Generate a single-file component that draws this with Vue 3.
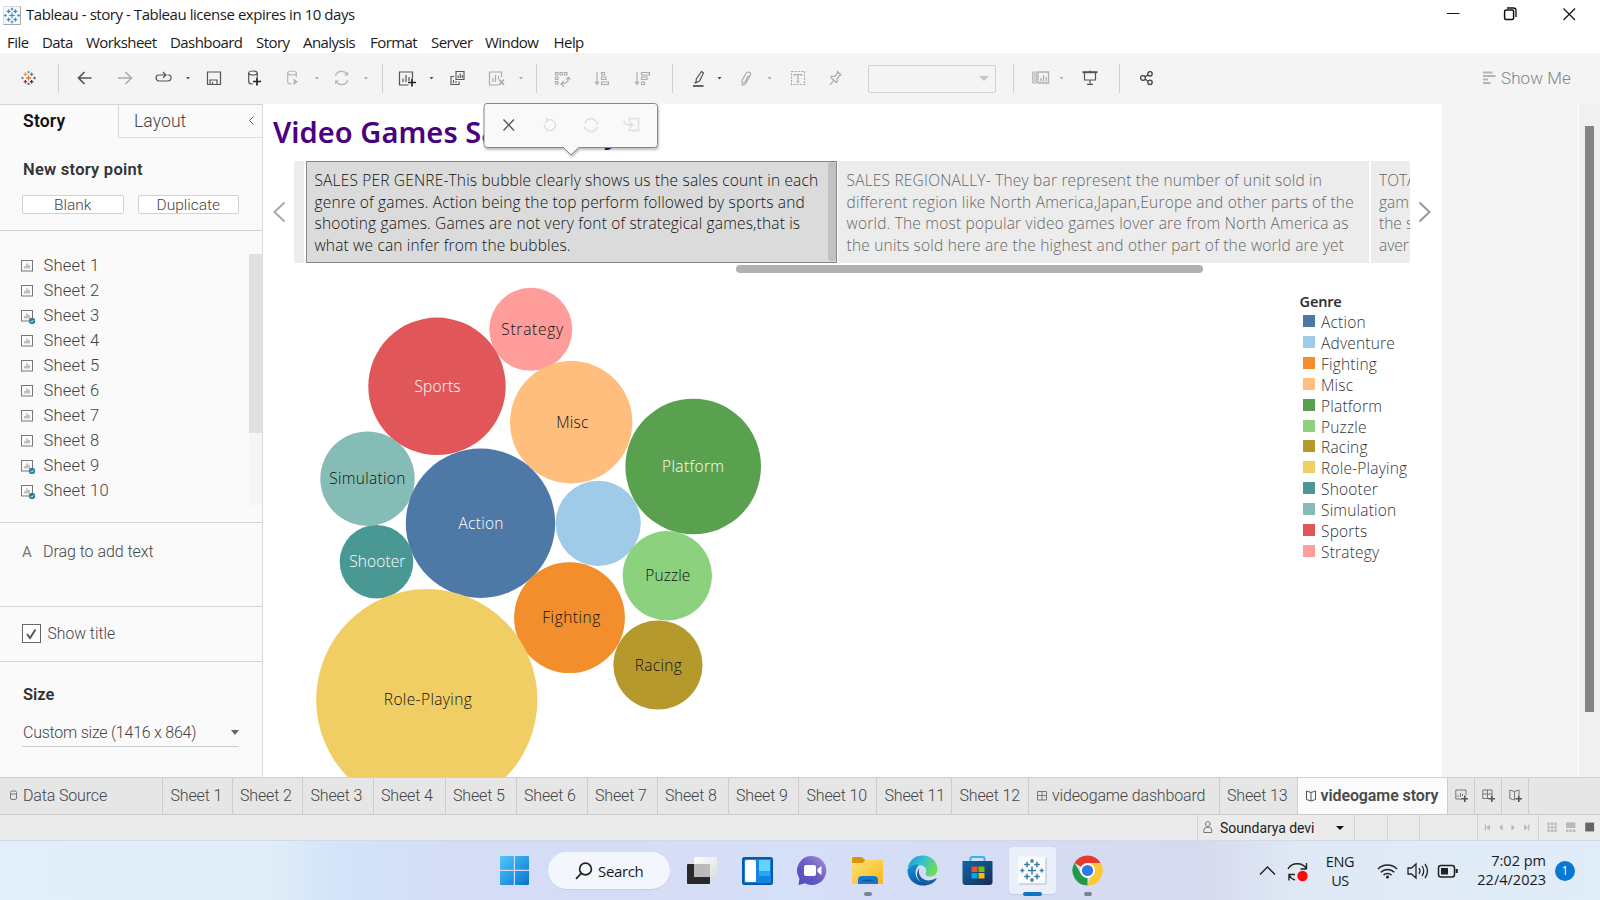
<script setup>
const menus = [
  { t: 'File', w: 35 }, { t: 'Data', w: 44 }, { t: 'Worksheet', w: 84 }, { t: 'Dashboard', w: 86 }, { t: 'Story', w: 47 },
  { t: 'Analysis', w: 67 }, { t: 'Format', w: 61 }, { t: 'Server', w: 54 }, { t: 'Window', w: 68.5 }, { t: 'Help', w: 40 },
]
const sheets = [1, 2, 3, 4, 5, 6, 7, 8, 9, 10].map(n => ({ n, used: [3, 9, 10].includes(n) }))
const bubbles = [
  { n: 'Strategy', x: 530.8, y: 328.8, r: 41.5, c: '#ff9d9a', tx: 532.2, w: 62 },
  { n: 'Sports', x: 437, y: 385.8, r: 68.7, c: '#e15759', tx: 437.5, w: 46, l: 1 },
  { n: 'Misc', x: 571.2, y: 421.8, r: 61.2, c: '#ffbe7d', tx: 572.3, w: 32 },
  { n: 'Platform', x: 693.2, y: 466, r: 67.8, c: '#59a14f', tx: 693, w: 62, l: 1 },
  { n: 'Simulation', x: 367.5, y: 478.2, r: 47.2, c: '#86bcb6', tx: 367.3, w: 76 },
  { n: 'Action', x: 480.5, y: 522.7, r: 74.7, c: '#4e79a7', tx: 481, w: 45, l: 1 },
  { n: '', x: 598.2, y: 522.8, r: 42.6, c: '#a0cbe8', tx: 598, w: 1 },
  { n: 'Shooter', x: 376.5, y: 561.3, r: 36.8, c: '#499894', tx: 377.3, w: 56, l: 1 },
  { n: 'Puzzle', x: 667.3, y: 575.3, r: 44.7, c: '#8cd17d', tx: 667.8, w: 45 },
  { n: 'Fighting', x: 569.5, y: 617.2, r: 55.4, c: '#f28e2b', tx: 571.3, w: 58 },
  { n: 'Racing', x: 658, y: 664.5, r: 44.6, c: '#b6992d', tx: 658.2, w: 47 },
  { n: 'Role-Playing', x: 426.8, y: 699.2, r: 110.6, c: '#f1ce63', tx: 427.8, w: 88 },
]
const legend = [
  ['Action', '#4e79a7'], ['Adventure', '#a0cbe8'], ['Fighting', '#f28e2b'], ['Misc', '#ffbe7d'],
  ['Platform', '#59a14f'], ['Puzzle', '#8cd17d'], ['Racing', '#b6992d'], ['Role-Playing', '#f1ce63'],
  ['Shooter', '#499894'], ['Simulation', '#86bcb6'], ['Sports', '#e15759'], ['Strategy', '#ff9d9a'],
]
const tabs = [
  { t: 'Sheet 1', w: 69.5 }, { t: 'Sheet 2', w: 70.5 }, { t: 'Sheet 3', w: 70.5 }, { t: 'Sheet 4', w: 72 }, { t: 'Sheet 5', w: 71 },
  { t: 'Sheet 6', w: 71 }, { t: 'Sheet 7', w: 70 }, { t: 'Sheet 8', w: 71 }, { t: 'Sheet 9', w: 70.5 }, { t: 'Sheet 10', w: 78 },
  { t: 'Sheet 11', w: 75 }, { t: 'Sheet 12', w: 77 },
]
const active = ['SALES PER GENRE-This bubble clearly shows us the sales count in each', 'genre of games. Action being the top perform followed by sports and', 'shooting games. Games are not very font of strategical games,that is', 'what we can infer from the bubbles.']
const regional = ['SALES REGIONALLY- They bar represent the number of unit sold in', 'different region like North America,Japan,Europe and other parts of the', 'world. The most popular video games lover are from North America as', 'the units sold here are the highest and other part of the world are yet']
const total = ['TOTA', 'gam', 'the s', 'aver']
const crosses = [[0, 0, 4], [-5, -6, 2.8], [5, -6, 2.8], [-5, 6, 2.8], [5, 6, 2.8], [0, -9.5, 1.9], [0, 9.5, 1.9], [-9.7, 0, 1.9], [9.7, 0, 1.9]]
const crossPath = ([x, y, r]) => `M${x - r} ${y}h${2 * r}M${x} ${y - r}v${2 * r}`
const logoColors = ['#e8762c', '#e09a45', '#5b879b', '#c72035', '#1f447e', '#7199a6', '#5b6591', '#7199a6', '#5b6591']
</script>

<template>
  <div class="app">
    <header class="title">
      <svg class="appicon" width="18" height="19" viewBox="-9 -9.5 18 19">
        <rect x="-8.5" y="-9" width="17" height="18" fill="#f4f7fa" stroke="#dcdcdc" />
        <path d="M8.5-9V9H-8.5" fill="none" stroke="#a8a8a8" />
        <g transform="scale(.68)"><path v-for="(c, i) in crosses" :key="i" :d="crossPath(c)" stroke="#3987b5" stroke-width="1.7" /></g>
      </svg>
      <span class="apptitle">Tableau - story - Tableau license expires in 10 days</span>
      <svg class="winctl" width="160" height="30" viewBox="1440 0 160 30" fill="none" stroke="#111" stroke-width="1.2">
        <path d="M1447 13.5h12.500M1563.500 8.500l11.500 11.500m0-11.500l-11.500 11.500" />
        <rect x="1504.600" y="10" width="9" height="9.600" rx="1.500" stroke-width="1.500" />
        <path d="M1507 8h6.500a2.500 2.500 0 0 1 2.500 2.500V17" stroke-width="1.300" />
      </svg>
    </header>
    <nav class="menu"><span v-for="m in menus" :key="m.t" :style="{ width: m.w + 'px' }">{{ m.t }}</span></nav>

    <div class="toolbar">
      <svg width="58" height="51" viewBox="0 53 58 51">
        <g transform="translate(28.500 78) scale(.62)"><path v-for="(c, i) in crosses" :key="i" :d="crossPath(c)" :stroke="logoColors[i]" stroke-width="2.100" /></g>
      </svg><i class="sep" />
      <svg width="323" height="51" viewBox="59 53.500 323 51" fill="none" stroke="#555" stroke-width="1.200">
        <path d="M91.500 78.500H78.500m6-6l-6 6l6 6" stroke-width="1.700" />
        <g stroke="#a9a9a9"><path d="M118 78.500h13.500m-6-6l6 6l-6 6" stroke-width="1.500" /></g>
        <path d="M167.500 75.500h1c4 0 3 6-.5 6h-9c-4-.5-4-6 0-6h6M163 72.500l3 3l-3 2.800" />
        <path d="M186 77.500h4l-2 2.500z" fill="#555" stroke="none" />
        <path d="M207.500 72.500h13v12.500h-13zM210 85v-4.500h7V85M212.500 82.500V85" />
        <g><ellipse cx="253" cy="73.500" rx="4.300" ry="2" /><path d="M248.700 73.500v9c0 1.500 2 2 4 2M257.300 73.500v4" /><path d="M257 78v8m-4-4h8" stroke="#222" stroke-width="1.700" /></g>
        <g stroke="#b5b5b5"><ellipse cx="292" cy="73.500" rx="4.300" ry="2" /><path d="M287.700 73.500v9c0 1.500 2 2 4 2M296.300 73.500v4" /><path d="M293.500 79v6.500l4.500-3.200z" fill="#b5b5b5" stroke="none" />
          <path d="M335.500 76.500a6.200 6 0 0 1 11.500-1.500m.5-2.500v3h-3M347.700 80.500a6.200 6 0 0 1-11.500 1.500m-.5 2.500v-3h3" /></g>
        <path d="M315 77.500h4l-2 2.500zM364 77.500h4l-2 2.500z" fill="#aaa" stroke="none" />
      </svg><i class="sep" />
      <svg width="153" height="51" viewBox="382.500 53 153 51" fill="none" stroke="#555" stroke-width="1.200">
        <path d="M412 78v-6h-13v13h9M402.500 82v-3.500M405.500 82v-7M408.500 81v-4" /><path d="M411.500 78.500v8m-4-4h8" stroke="#222" stroke-width="1.700" />
        <path d="M429 77h4l-2 2.500z" fill="#555" stroke="none" />
        <path d="M455.500 71.500h8v8h-8zM453.500 76.500h-3v8h8v-3M453 83v-3M455.500 83v-2M457.800 78v-2.500M459.800 78v-4.500M461.800 78v-3" stroke-width="1.100" />
        <g stroke="#aaa"><path d="M501 77v-5h-12v13h9M492.500 82v-4M495 82v-7M498 79v-3" /><path d="M498.500 79.500l5 5.500m0-5.500l-5 5.500" stroke-width="1.700" /></g>
        <path d="M518.500 77h4l-2 2.500z" fill="#aaa" stroke="none" />
      </svg><i class="sep" />
      <svg width="135" height="51" viewBox="537 53 135 51" fill="none" stroke="#aaa" stroke-width="1.100">
        <path d="M555.500 72.500h2.500v2.500h-2.500zM560 72.500h2.500v2.500h-2.500zM564.500 72.500h2.500v2.500h-2.500zM555.500 77h2.500v2.500h-2.500zM555.500 81.500h2.500v2.500h-2.500zM568.500 77.500c0 4.500-3 6.500-7.500 6.500m3-3l-3 3l3 2.500M566.300 79.500l2.200-2.200l2 2.200" />
        <path d="M597 72v12m-2-2.500l2 3l2-3M601.500 72.500h3v2.500h-3zM601.500 77h4.500v2.500h-4.500zM601.500 82h7v2.500h-7z" />
        <path d="M637 72v12m-2-2.500l2 3l2-3M641.500 72.500h8v2.500h-8zM641.500 77h5.500v2.500h-5.500zM641.500 82h3v2.500h-3z" />
      </svg><i class="sep" />
      <svg width="196" height="51" viewBox="673 53 196 51" fill="none" stroke="#555" stroke-width="1.200">
        <path d="M701.500 71.500l2 1.500-4 8-3.500 1.800.300-3.800zM694.500 83l1.500-1" /><path d="M693 86h10.500" stroke-width="1.800" />
        <path d="M717.500 77h4l-2 2.500z" fill="#444" stroke="none" />
        <g stroke="#aaa"><path d="M748.500 75.500l-3.500 6.500c-1.200 2-4 1-3-1.500l4-7c1.500-2.500 5.500-1.500 4.500 1.500l-4.500 8c-1.200 2-3.500 2.500-4.500 1.500" />
          <rect x="791.500" y="71.500" width="13" height="13" stroke-dasharray="2 1.200" /><path d="M794.500 76v-1.500h7V76M798 74.500v7.500m-1.500 0h3" />
          <path d="M837.500 71.500l3.500 3.500-1.500.500-2.500 3 .300 3.500-1 .500-5.500-5 .700-1.200 3.300.200 2.500-3zM834 80l-4 5" /></g>
        <path d="M767.500 77h4l-2 2.500z" fill="#aaa" stroke="none" />
      </svg>
      <div class="fitbox"><b /></div><i class="sep gap17" />
      <svg width="105" height="51" viewBox="1014.500 53.500 105 51" fill="none" stroke="#b0b0b0" stroke-width="1.200">
        <path d="M1038.500 72.500h10.500v11h-10.500zM1041.500 82v-3.500M1044 82v-6.500M1046.700 82v-4.500" stroke-width="1.300" /><path d="M1033 72.500h4v2h-4zM1033 75.500h4v2h-4zM1033 78.500h4v2h-4zM1033 81.500h4v2h-4z" stroke-width=".9" />
        <path d="M1060 77.500h4l-2 2.500z" fill="#aaa" stroke="none" />
        <path d="M1085 73v7.500h11V73M1090.500 81v3.500M1087.500 84.800h6M1090.500 71v2" stroke="#555" /><path d="M1083 72.700h15" stroke="#555" stroke-width="2" />
      </svg><i class="sep" />
      <svg width="60" height="51" viewBox="1120.500 53.500 60 51" fill="none" stroke="#444" stroke-width="1.300">
        <circle cx="1143.500" cy="78.500" r="2.400" /><circle cx="1150.500" cy="74.300" r="2.200" /><circle cx="1150.500" cy="82.800" r="2.200" /><path d="M1145.500 77.300l3-1.700M1145.500 79.700l3 1.800" />
      </svg>
      <div class="showme"><svg width="13" height="13"><path d="M0 1.500h9.500M0 5h12.500M0 8.500h5M0 12h7.500" stroke="#b5b5b5" stroke-width="2" /></svg><span>Show Me</span></div>
    </div>

    <main class="body">
      <aside class="side">
        <div class="sidetabs"><div class="t1">Story</div><div class="t2"><span>Layout</span><svg width="6" height="9" fill="none" stroke="#555"><path d="M4.500 .500l-4 4l4 4" /></svg></div></div>
        <section class="newpoint"><h3>New story point</h3><div class="btns"><button>Blank</button><button>Duplicate</button></div></section>
        <section class="sheets">
          <ul><li v-for="s in sheets" :key="s.n">
            <svg width="15" height="15" viewBox="0 0 15 15" fill="none" stroke="#777"><rect x=".5" y="1.500" width="11" height="10.500" /><path d="M4 9.500V7M6 9.500v-5M8 9.500V6" stroke="#888" /><g v-if="s.used"><circle cx="11" cy="12" r="3.200" fill="#2e7e9e" stroke="none" /><path d="M9.500 12l1.200 1.200l1.900-2.100" stroke="#fff" stroke-width=".8" /></g></svg>
            <span>Sheet {{ s.n }}</span>
          </li></ul>
          <div class="track"><div class="thumb" /></div>
        </section>
        <section class="drag"><span class="a">A</span><span>Drag to add text</span></section>
        <section class="show"><svg width="19" height="19" fill="none"><rect x=".5" y=".5" width="18" height="18" fill="#fff" stroke="#666" /><path d="M5 10l3 4l5.500-8.500" stroke="#555" stroke-width="1.900" /></svg><span>Show title</span></section>
        <section class="size"><h3>Size</h3><div class="sel"><span>Custom size (1416 x 864)</span><b /></div></section>
      </aside>

      <div class="story">
        <h1>Video Games Sales Story</h1>
        <div class="nav">
          <svg class="al" width="14" height="22" fill="none" stroke="#aaa" stroke-width="2"><path d="M11.500 1.500L1.500 11l10 9.500" /></svg>
          <div class="strip">
            <div class="edge" />
            <div class="pt on"><p v-for="l in active" :key="l">{{ l }}</p><i /></div>
            <div class="pt mid"><p v-for="l in regional" :key="l">{{ l }}</p></div>
            <div class="pt last"><p v-for="l in total" :key="l">{{ l }}</p></div>
          </div>
          <svg class="ar" width="14" height="22" fill="none" stroke="#999" stroke-width="2"><path d="M1.500 1.500L11.500 11l-10 9.500" /></svg>
        </div>
        <div class="hbar" />
        <div class="viz">
          <svg class="chart" width="560" height="499" viewBox="263 277.500 560 499">
            <g v-for="b in bubbles" :key="b.c"><circle :cx="b.x" :cy="b.y" :r="b.r" :fill="b.c" />
              <text v-if="b.n" :x="b.tx" :y="b.y + 5.5" :textLength="b.w" text-anchor="middle" :class="{ lt: b.l }">{{ b.n }}</text></g>
          </svg>
          <div class="legend"><h4>Genre</h4><div v-for="g in legend" :key="g[0]" class="lg"><i :style="{ background: g[1] }" /><span>{{ g[0] }}</span></div></div>
        </div>
        <svg class="popup" width="190" height="70" viewBox="476 96 190 70" fill="none">
          <path class="bubble" d="M487 103.500H654.500q3 0 3 3V144.500q0 3-3 3H578.500L571 155l-7.500-7.500H487q-3 0-3-3V106.500q0-3 3-3z" fill="#f9f9f9" stroke="#888" />
          <path d="M503.500 119.500l10.500 11m0-11l-10.500 11" stroke="#555" stroke-width="1.300" />
          <g stroke="#ddd" stroke-width="1.400"><path d="M547 120.500a5.500 5.500 0 1 1-2.500 4M546 118l1.500 2.700-2.500 2" /><path d="M585 123.500a6 6 0 0 1 11-2m1 0v3M597 127a6 6 0 0 1-11 1.500m-1 1v-3" /><path d="M629.500 122v-3.500h9v12h-9v-3M624 120.500c0 4 2 4.500 8 4.500m-2-2.500l2.500 2.500l-2.500 2.500" /></g>
        </svg>
      </div>
      <div class="gutter" />
      <div class="vtrack"><i /></div>
    </main>

    <footer class="tabs">
      <div class="tab ds"><svg width="8" height="11" fill="none" stroke="#777"><rect x=".5" y="1" width="6" height="8.500" rx="1.500" /><path d="M.5 4h6" /></svg><span>Data Source</span></div>
      <div v-for="t in tabs" :key="t.t" class="tab" :style="{ width: t.w + 'px' }"><span>{{ t.t }}</span></div>
      <div class="tab db"><svg width="10" height="10" fill="none" stroke="#777"><path d="M.5 .5h9v8.500h-9zM5 .5v8.500M.5 4.500h9" /></svg><span>videogame dashboard</span></div>
      <div class="tab s13"><span>Sheet 13</span></div>
      <div class="tab cur"><svg width="10" height="12" fill="none" stroke="#555"><path d="M5 2.500L.5 1v8.500L5 11l4.500-1.500V1L5 2.500V11" /></svg><span>videogame story</span></div>
      <div class="tab add"><svg width="14" height="14" fill="none" stroke="#777"><path d="M11 6V1H.8v9H7M3 8V6M5.500 8V4M7.500 7V5" /><path d="M9.800 6.500v6.500M6.500 9.800H13" stroke="#555" stroke-width="1.600" /></svg></div>
      <div class="tab add"><svg width="14" height="14" fill="none" stroke="#777"><path d="M10 6V1H.8v8.500H7M5.500 1v8.500M.8 5H10" /><path d="M9.800 6.500v6.500M6.500 9.800H13" stroke="#555" stroke-width="1.600" /></svg></div>
      <div class="tab add"><svg width="14" height="14" fill="none" stroke="#777"><path d="M10 6V1L5.500 2.500L.8 1v8.500L5.500 11V2.500" /><path d="M9.800 6.500v6.500M6.500 9.800H13" stroke="#555" stroke-width="1.600" /></svg></div>
    </footer>
    <div class="status">
      <div class="user"><svg width="10" height="13" fill="none" stroke="#777"><circle cx="4.800" cy="3" r="2.400" /><path d="M.8 11.500V9q0-2.500 2.500-2.500h3Q8.800 6.500 8.800 9v2.500z" /></svg><span>Soundarya devi</span><b /></div>
      <div class="c33" /><div class="c32" /><div class="c58" />
      <svg class="pager" width="61" height="25" viewBox="1478 815 61 25" fill="#b5b5b5"><path d="M1485 824.500h1.200v6H1485zM1490 824.500v6l-3.500-3zM1503 824.500v6l-3.500-3zM1512 824.500v6l3.500-3zM1525 824.500v6l3.500-3zM1529 824.500h1.200v6H1529z" /></svg>
      <svg class="views" width="62" height="25" viewBox="1538 815 62 25" fill="#b8b8b8"><path d="M1546.500 822.500h2.500v2.500h-2.500zm3.500 0h2.500v2.500H1550zm3.500 0h2.500v2.500h-2.500zM1546.500 826h2.500v2.500h-2.500zm3.500 0h2.500v2.500H1550zm3.500 0h2.500v2.500h-2.500zM1546.500 829.500h2.500v2.500h-2.500zm3.500 0h2.500v2.500H1550zm3.500 0h2.500v2.500h-2.500zM1565.500 822.500h9.500v5.500h-9.500zM1565.500 829.500h2.500v2.500h-2.500zm3.500 0h2.500v2.500h-2.500zm3.500 0h2.500v2.500h-2.500z" /><path d="M1585 822.500h9v9h-9z" fill="#666" /></svg>
    </div>

    <div class="taskbar">
      <svg class="win" width="29" height="29"><defs><linearGradient id="w" x1="0" y1="0" x2="1" y2="1" gradientUnits="objectBoundingBox"><stop offset="0" stop-color="#4fc8fb" /><stop offset="1" stop-color="#0873d0" /></linearGradient></defs><path d="M1 0h12.800v13.800H0V1a1 1 0 0 1 1-1zM15 0h13a1 1 0 0 1 1 1v12.800H15zM0 15h13.800v14H1a1 1 0 0 1-1-1zM15 15h14v13a1 1 0 0 1-1 1H15z" fill="url(#w)" /></svg>
      <div class="search"><svg width="18" height="18" fill="none" stroke="#222" stroke-width="1.700"><circle cx="10.500" cy="7" r="5.900" /><path d="M6.500 11.200L1 16.800" /></svg><span>Search</span></div>
      <div class="slot"><svg width="30" height="30"><defs><linearGradient id="tv" x2="1" y2="1"><stop stop-color="#fff" /><stop offset="1" stop-color="#ddd" /></linearGradient></defs><rect y="8" width="23" height="20" rx="1" fill="#292929" /><rect x="7" y="1" width="23" height="20" rx="1" fill="url(#tv)" /><rect x="7" y="8" width="16" height="13" fill="#bbb" /></svg></div>
      <div class="slot"><svg width="31" height="28"><rect x="1" y="1" width="29" height="26" rx="1.500" fill="#1487dc" stroke="#0b57a5" stroke-width="2" /><rect x="3" y="3" width="11" height="22" rx="1.500" fill="#fff" /><rect x="17" y="3" width="11" height="11" fill="#63d3ff" /><rect x="17" y="14" width="11" height="5" fill="#25a9f4" /><rect x="17" y="19" width="11" height="6" fill="#0c86e4" /></svg></div>
      <div class="slot"><svg width="30" height="30"><defs><linearGradient id="tm" x1="0" y1="1" x2="1" y2="0"><stop stop-color="#4d49bd" /><stop offset=".5" stop-color="#6a5cc4" /><stop offset="1" stop-color="#a793d9" /></linearGradient></defs><path d="M15 0a14.500 14.500 0 1 1-7 27.300L1.500 29l1-6.500A14.500 14.500 0 0 1 15 0z" fill="url(#tm)" /><rect x="7" y="9" width="12" height="11" rx="2" fill="#fff" /><path d="M20.500 13l4-3v9l-4-3z" fill="#fff" /></svg></div>
      <div class="slot run"><svg width="31" height="30"><defs><linearGradient id="fo" x2="1" y2="1"><stop stop-color="#ffe07a" /><stop offset="1" stop-color="#f9b916" /></linearGradient></defs><path d="M0 2.500Q0 1 1.500 1H10l3.500 3.500H29.500Q31 4.500 31 6V10H0z" fill="#d9940e" /><path d="M0 7h11l2.500-3.200H29.500Q31 3.800 31 5.500V28H0z" fill="url(#fo)" /><path d="M6 28v-4q0-4 4-4h12q4 0 4 4v4z" fill="#1379cf" /><path d="M10 24.500h12" stroke="#0a4f93" stroke-width="1.500" /></svg></div>
      <div class="slot"><svg width="31" height="31"><defs><linearGradient id="e1" x2="1" y2=".4"><stop stop-color="#169bd7" /><stop offset=".55" stop-color="#35c2cf" /><stop offset="1" stop-color="#6bdc5c" /></linearGradient><linearGradient id="e2" x2=".5" y2="1"><stop stop-color="#1893da" /><stop offset="1" stop-color="#0c4f9e" /></linearGradient></defs><path d="M.5 13.500C2 5 8.500 .5 15.500 .5 24 .5 30.500 6.500 30.500 14c0 5-3.500 7.500-7.500 7.500-3.500 0-5-1.500-4.500-3 1.500-2.500 1-8-6-8.500C6.500 10 1.500 12 .5 13.500z" fill="url(#e1)" /><path d="M.5 14.500C3 10 8 9 12.500 10c-3 2-5 6-3.500 11 2 6.500 9 7.500 14 5.500l6.500-3C27.500 28 22 30.500 16 30.500 7 30.500 0 23.500.5 14.500z" fill="url(#e2)" /><path d="M12.500 13c-2.500 5 1.500 12 8.500 12.500 3 0 6-1 9-2.500-3 6-10 7.500-15 4.500-5.500-3-6.500-10-2.500-14.500z" fill="#15609f" /></svg></div>
      <div class="slot"><svg width="31" height="30"><defs><linearGradient id="st" x2="1" y2="1"><stop stop-color="#0e67aa" /><stop offset="1" stop-color="#1a2c50" /></linearGradient></defs><path d="M8.500 6V2.500Q8.500 1 10 1h11q1.500 0 1.500 1.500V6" fill="none" stroke="#35b6ea" stroke-width="2" /><path d="M.5 5h30v21q0 3-3 3h-24q-3 0-3-3z" fill="url(#st)" /><path d="M9.500 10.500h6V16h-6z" fill="#f25022" /><path d="M16.500 10.500h6V16h-6z" fill="#7fba00" /><path d="M9.500 17h6v5.500h-6z" fill="#00a4ef" /><path d="M16.500 17h6v5.500h-6z" fill="#ffb900" /></svg></div>
      <div class="slot tb"><div><svg width="30" height="29" viewBox="-15 -14.500 30 29"><rect x="-14" y="-14" width="28" height="27.500" fill="#f8fafc" /><path d="M14-13V13.500H-13" fill="none" stroke="#b9b9b9" /><path v-for="(c, i) in crosses" :key="i" :d="crossPath(c)" stroke="#3b7ea6" stroke-width="1.500" /></svg></div></div>
      <div class="slot run"><svg width="31" height="31" viewBox="-15.500 -15.500 31 31"><path d="M0 0L-13-7.500A15 15 0 0 1 13-7.500z" fill="#e33b2e" /><path d="M0 0L13-7.500A15 15 0 0 1 0 15L4 3z" fill="#fcc934" /><path d="M0 0L0 15A15 15 0 0 1-13-7.500L-6 4z" fill="#219a48" /><path d="M0-7.500H13A15 15 0 0 1 0 15L6.500 3.700z" fill="#fcc934" /><circle r="7.500" fill="#fff" /><circle r="5.600" fill="#3078e8" /></svg></div>
      <div class="tray">
        <svg width="70" height="50" viewBox="1255 845 70 50" fill="none" stroke="#222" stroke-width="1.400"><path d="M1260 873.500l7.500-7.500l7.500 7.500" /><path d="M1288 868a10 8.500 0 0 1 18.500 0v-6M1306.500 868h-6M1295 879a10 9 0 0 1-6-5m6-.500h-6v6" /><circle cx="1302.500" cy="875" r="5.200" fill="#fb0a0a" stroke="none" /></svg>
        <div class="lang"><span>ENG</span><span>US</span></div>
        <svg width="90" height="50" viewBox="1374 845 90 50" fill="none" stroke="#222" stroke-width="1.500"><path d="M1378 868a13.500 13.500 0 0 1 19 0M1380.800 871.300a9.500 9.500 0 0 1 13.500 0M1383.500 874.200a5.700 5.700 0 0 1 8 0" /><circle cx="1387.500" cy="876" r="1.500" fill="#222" stroke="none" /><path d="M1408 867h3.500l4.500-4v14l-4.500-4h-3.500zM1419 867q2 3 0 6M1422 865q3.500 5 0 10M1425 863q5 7 0 14" stroke-width="1.300" /><rect x="1438.500" y="864.500" width="16" height="11.500" rx="2.500" /><path d="M1441 867h7v6.500h-7z" fill="#222" stroke="none" /><path d="M1456.700 868v4" stroke-width="2.200" /></svg>
        <div class="clock"><span>7:02 pm</span><span>22/4/2023</span></div>
        <div class="badge">1</div>
      </div>
    </div>
  </div>
</template>

<style>
html, body { margin: 0; overflow: hidden; }
</style>
<style scoped>
* { box-sizing: border-box; }
h1, h3, h4, p, ul { margin: 0; padding: 0; }
svg { display: block; flex: none; }
.app { width: 1600px; height: 900px; overflow: hidden; display: flex; flex-direction: column; background: #fff; font-family: Roboto, "Liberation Sans", sans-serif; color: #444; white-space: nowrap; }
.title { height: 30px; display: flex; align-items: center; padding-left: 3px; font: 15px "Open Sans", sans-serif; color: #1b1b1b; }
.apptitle { margin-left: 5px; padding-bottom: 2px; letter-spacing: -.45px; }
.winctl { margin-left: auto; }
.menu { height: 23px; padding-left: 7px; display: flex; font: 15px/24px "Open Sans", sans-serif; letter-spacing: -.55px; color: #1b1b1b; }
.menu span { flex: none; }
.toolbar { height: 51px; background: #f4f4f4; display: flex; align-items: center; }
.sep { flex: none; width: 1px; height: 29px; background: #d0d0d0; }
.gap17 { margin-left: 17px; }
.fitbox { width: 128px; height: 28px; border: 1px solid #d2d2d2; border-radius: 2px; display: flex; align-items: center; justify-content: flex-end; padding-right: 6px; margin-left: -1px; }
.fitbox b { border: 5px solid transparent; border-top-color: #c4c4c4; border-bottom: 0; }
.showme { margin-left: auto; margin-right: 29px; padding-bottom: 2px; display: flex; align-items: center; gap: 5px; font-size: 17px; color: #858585; font-weight: 300; letter-spacing: .08px; }
.body { height: 673px; display: flex; }
.side { width: 263px; background: #fafafa; border-right: 1px solid #dcdcdc; border-top: 1px solid #d4d4d4; font-weight: 300; font-size: 16px; display: flex; flex-direction: column; }
.sidetabs { height: 33px; display: flex; }
.t1 { width: 118px; padding-left: 23px; font: 600 17.500px/32px Roboto, sans-serif; letter-spacing: .2px; color: #111; }
.t2 { flex: 1; border-left: 1px solid #d8d8d8; border-bottom: 1px solid #dcdcdc; padding: 0 7px 1px 15px; display: flex; align-items: center; justify-content: space-between; font-size: 17.500px; letter-spacing: .1px; }
h3 { font: 600 16.500px/22px Roboto, sans-serif; color: #333; }
.newpoint { height: 93px; padding: 21px 22px 0 23px; border-bottom: 1px solid #d0d0d0; }
.newpoint h3 { letter-spacing: .25px; }
.btns { display: flex; gap: 14px; margin: 14px 0 0 -1px; }
button { width: 101.500px; height: 19px; padding: 0; background: #fff; border: 1px solid #d2d2d2; border-radius: 2px; font: 300 15.500px/18px Roboto, sans-serif; color: #444; }
.sheets { height: 292px; border-bottom: 1px solid #d4d4d4; padding-top: 23px; display: flex; justify-content: space-between; }
ul { list-style: none; padding-left: 21px; }
li { height: 25px; display: flex; align-items: center; gap: 7.500px; font-size: 16.600px; letter-spacing: .18px; }
li span { padding-bottom: 2px; }
.track { width: 13px; height: 251px; background: #f5f5f5; }
.thumb { height: 179px; background: #e1e1e1; }
.drag { height: 84px; border-bottom: 1px solid #d4d4d4; display: flex; padding: 19px 22px; line-height: 20px; letter-spacing: -.05px; }
.drag .a { width: 21px; font-size: 15px; font-weight: 400; color: #777; }
.show { height: 55px; border-bottom: 1px solid #d4d4d4; display: flex; padding: 17px 22px; gap: 6.500px; line-height: 20px; font-size: 15.700px; }
.size { padding: 22px 23px 0 22px; }
.size h3 { padding-left: 1px; }
.sel { height: 26px; margin-top: 15px; padding-bottom: 2px; border-bottom: 1px solid #ccc; display: flex; align-items: center; justify-content: space-between; padding-left: 1px; letter-spacing: -.24px; }
.sel b { border: 4.500px solid transparent; border-top: 5px solid #666; border-bottom: 0; }
.story { position: relative; width: 1179px; height: 673px; overflow: visible; font-family: "Noto Sans", sans-serif; }
h1 { height: 57px; padding-left: 10px; font: 600 29px/56px "Noto Sans", sans-serif; color: #4b0082; letter-spacing: .05px; }
.nav { height: 102px; display: flex; align-items: center; padding-left: 10px; }
.al { margin-right: 7px; }
.ar { margin-left: 8px; }
.strip { width: 1116px; height: 102px; display: flex; overflow: hidden; }
.edge { flex: none; width: 10px; margin-right: 2px; background: #ececec; }
.pt { flex: none; background: #ececec; padding: 9px 0 0 8.500px; height: 102px; margin-right: 1.500px; overflow: hidden; font-family: "Open Sans", "Noto Sans", sans-serif; font-weight: 300; font-size: 15.500px; letter-spacing: .17px; }
.pt p { line-height: 21.670px; }
.on { width: 530.500px; position: relative; background: #dbdbdb; border: 1px solid #868686; color: #111; padding: 8px 0 0 7.500px; }
.on i { position: absolute; right: 0; top: 0; width: 8px; height: 99px; background: #c1c1c1; border-radius: 3px; }
.mid { width: 531px; color: #666; letter-spacing: .2px; }
.last { width: 39px; color: #666; letter-spacing: 0; }
.hbar { width: 467px; height: 8px; margin: 2px 0 0 473px; border-radius: 4px; background: #b1b1b1; }
.viz { display: flex; height: 504px; }
.chart { margin-top: 5px; }
.chart text { font: 300 15.500px "Open Sans", "Noto Sans", sans-serif; fill: #111; }
.chart text.lt { fill: #fff; }
.legend { margin-left: 476.500px; padding-top: 18px; font: 300 15.500px "Open Sans", "Noto Sans", sans-serif; color: #333; letter-spacing: .2px; }
h4 { font: 600 14.500px/21px "Noto Sans", sans-serif; color: #333; letter-spacing: -.15px; }
.lg { height: 20.830px; display: flex; align-items: center; padding-left: 3.500px; gap: 6px; }
.lg i { width: 12px; height: 12px; margin-top: -2px; }
.popup { position: absolute; left: 213px; top: -8px; z-index: 2; filter: drop-shadow(1px 2px 1px rgba(0,0,0,.25)); }
.gutter { width: 137px; background: #f4f4f4; border-right: 1px solid #fff; }
.vtrack { flex: 1; background: #f0f0f0; padding: 22px 0 0 6px; }
.vtrack i { display: block; width: 9px; height: 586px; background: #848484; }
.tabs { height: 38px; background: #e6e6e6; border-top: 1px solid #cfcfcf; border-bottom: 1px solid #cacaca; display: flex; font-size: 16px; font-weight: 300; color: #444; letter-spacing: -.15px; }
.tab { flex: none; display: flex; align-items: center; border-right: 1px solid #cdcdcd; padding-left: 7.500px; padding-bottom: 1px; }
.ds { width: 163px; padding-left: 10px; gap: 5px; }
.db { width: 190.500px; padding-left: 8px; gap: 5px; }
.s13 { width: 78px; }
.cur { width: 150px; background: #fbfbfb; padding-left: 8px; gap: 5px; font-weight: 600; color: #4a4a4a; letter-spacing: -.1px; }
.add { width: 27px; }
.status { height: 25px; background: #ebebeb; display: flex; justify-content: flex-end; font-size: 14px; color: #222; }
.status > * { flex: none; border-left: 1px solid #d3d3d3; }
.user { width: 157px; display: flex; align-items: center; padding: 0 10px 0 5px; gap: 7px; font-weight: 400; letter-spacing: -.05px; }
.user b { margin-left: auto; border: 4px solid transparent; border-top: 4px solid #111; border-bottom: 0; }
.c33 { width: 33px; } .c32 { width: 32px; } .c58 { width: 58px; }
.taskbar { height: 60px; display: flex; align-items: center; background: linear-gradient(90deg, #e2eff8 0, #e1edf8 270px, #d2e4fa 340px, #d4ddf5 450px, #d5ddf5 600px, #d5dff8 800px, #d5dbf1 1100px, #d6daee 1200px, #dfe9f5 1300px, #e0edf9 1600px); border-top: 1px solid #d0dae6; font-family: "Open Sans", sans-serif; color: #1a1a1a; }
.win { margin-left: 500px; }
.search { width: 122px; height: 37px; border-radius: 19px; background: #f3f6fd; margin-left: 19px; margin-right: 4.500px; display: flex; align-items: center; padding-left: 27px; gap: 5px; font-size: 15px; letter-spacing: -.35px; box-shadow: 0 1px 1px #c5cfe0; }
.slot { position: relative; width: 55px; height: 59px; display: flex; align-items: center; justify-content: center; flex: none; }
.run::after { content: ""; position: absolute; left: 24px; top: 51px; width: 8px; height: 4px; border-radius: 2px; background: #7b8290; }
.tb > div { width: 47px; height: 47px; border-radius: 4px; background: #eaf0fb; display: flex; align-items: center; justify-content: center; box-shadow: 0 1px 1px #c2cbe0; }
.tb::after { content: ""; position: absolute; left: 18px; top: 51px; width: 19px; height: 4px; border-radius: 2px; background: #1173c5; }
.tray { margin-left: auto; display: flex; align-items: center; }
.lang, .clock { display: flex; flex-direction: column; font-size: 14.500px; line-height: 19px; }
.lang { width: 30px; align-items: center; margin-right: 19px; letter-spacing: -.4px; }
.clock { width: 82px; align-items: flex-end; padding-bottom: 1px; letter-spacing: 0; }
.badge { width: 20px; height: 20px; border-radius: 50%; background: #0878d3; color: #fff; font-size: 12px; line-height: 20px; text-align: center; margin: 0 25px 0 9px; }
</style>
